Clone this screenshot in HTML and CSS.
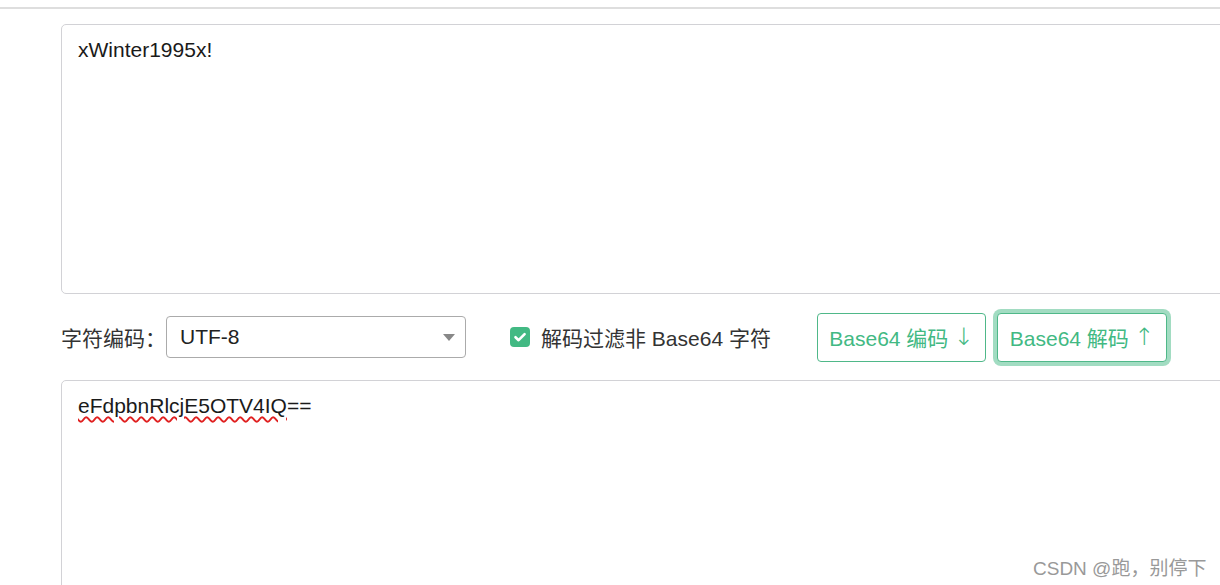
FILE: index.html
```html
<!DOCTYPE html>
<html lang="zh-CN">
<head>
<meta charset="utf-8">
<title>Base64</title>
<link rel="stylesheet" href="styles.css">
</head>
<body>
<div class="topbar"></div>
<main class="main">
  <div class="area area-top">xWinter1995x!</div>
  <div class="row">
    <span class="label">字符编码：</span>
    <div class="select">
      <span class="select-value">UTF-8</span>
      <span class="caret"></span>
    </div>
    <label class="check">
      <span class="box"><svg width="20" height="20" viewBox="0 0 20 20"><path d="M5.5 10.2 L8.6 13.2 L14.6 7.2" fill="none" stroke="#fff" stroke-width="2.6" stroke-linecap="round" stroke-linejoin="round"/></svg></span>
      <span class="check-text">解码过滤非 Base64 字符</span>
    </label>
    <button class="btn">Base64 编码 <span class="arrow">↓</span></button>
    <button class="btn btn-focus">Base64 解码 <span class="arrow">↑</span></button>
  </div>
  <div class="area area-bottom"><span class="spell">eFdpbnRlcjE5OTV4IQ</span>==</div>
</main>
<div class="watermark">CSDN @跑，别停下</div>
</body>
</html>
```
FILE: styles.css
```css
html, body {
  margin: 0;
  padding: 0;
  background: #fff;
  font-family: "Liberation Sans", "Noto Sans CJK SC", sans-serif;
  color: #222;
}
body {
  width: 1220px;
  height: 585px;
  overflow: hidden;
  position: relative;
}
.topbar {
  height: 7px;
  border-bottom: 2px solid #dedede;
}
.main {
  box-sizing: border-box;
  width: 1220px;
  height: 576px;
  overflow: hidden;
  padding: 15px 0 0 61px;
}
.area {
  box-sizing: border-box;
  width: 1300px;
  border: 1px solid #d2d2d6;
  border-radius: 5px;
  padding: 11px 16px;
  font-size: 21px;
  line-height: 28px;
  color: #1a1a1a;
  background: #fff;
}
.area-top {
  height: 270px;
}
.area-bottom {
  height: 260px;
}
.spell {
  text-decoration: underline wavy #e02020;
  text-decoration-thickness: 1.5px;
  text-underline-offset: 3px;
}
.row {
  height: 86px;
  display: flex;
  align-items: center;
}
.label {
  font-size: 21px;
  color: #333;
  width: 105px;
}
.select {
  box-sizing: border-box;
  width: 300px;
  height: 42px;
  border: 1px solid #ababab;
  border-radius: 4px;
  display: flex;
  align-items: center;
  justify-content: space-between;
  padding: 0 10px 0 13px;
  font-size: 21px;
  color: #222;
}
.caret {
  width: 0;
  height: 0;
  border-left: 6px solid transparent;
  border-right: 6px solid transparent;
  border-top: 7px solid #888;
}
.check {
  display: flex;
  align-items: center;
  margin-left: 44px;
  gap: 11px;
}
.box {
  width: 20px;
  height: 20px;
  border-radius: 4px;
  background: #42b983;
  display: flex;
}
.check-text {
  font-size: 21px;
  color: #333;
}
.btn {
  box-sizing: border-box;
  height: 49px;
  width: 169px;
  background: #fff;
  border: 1px solid #4fb889;
  border-radius: 4px;
  color: #42b983;
  font-family: inherit;
  font-size: 21px;
  padding: 0;
  margin-left: 46px;
  display: flex;
  align-items: center;
  justify-content: center;
}
.arrow {
  font-family: "DejaVu Sans", sans-serif;
  font-size: 24px;
  margin-left: 5px;
  font-weight: 300;
}
.btn-focus {
  width: 170px;
  margin-left: 11px;
  box-shadow: 0 0 0 4px #a2dcc2;
}
.watermark {
  position: absolute;
  left: 1033px;
  top: 553px;
  font-size: 19px;
  color: #999;
}
```
